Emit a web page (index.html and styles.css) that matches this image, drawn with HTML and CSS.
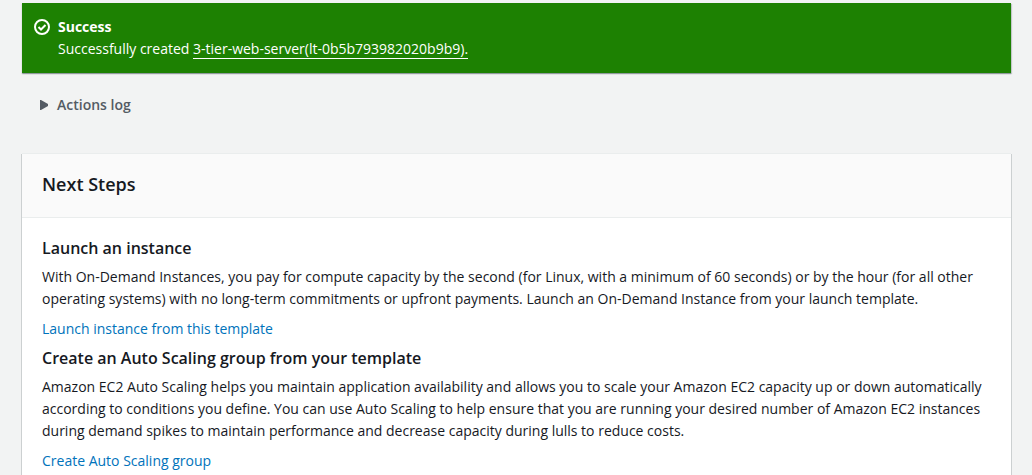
FILE: index.html
```html
<!DOCTYPE html>
<html lang="en">
<head>
<meta charset="utf-8">
<title>Create launch template</title>
<link rel="stylesheet" href="styles.css">
</head>
<body>
<main class="page">
  <section class="flash" role="status">
    <svg class="flash-icon" viewBox="0 0 16 16" aria-hidden="true"><circle cx="8" cy="8" r="7"/><path d="M4.500 8l2.500 2.500 4.500-4.500"/></svg>
    <div>
      <h2 class="flash-title">Success</h2>
      <p class="flash-text">Successfully created <a class="flash-link" href="#template">3-tier-web-server(lt-0b5b793982020b9b9).</a></p>
    </div>
  </section>
  <button class="log" type="button" aria-expanded="false">
    <svg class="log-icon" viewBox="0 0 9 10" aria-hidden="true"><path d="M0 0h1l7 4v2l-7 4H0z"/></svg>
    <span>Actions log</span>
  </button>
  <section class="card">
    <header class="card-header"><h1 class="card-title">Next Steps</h1></header>
    <div class="card-body">
      <h2 class="step-title">Launch an instance</h2>
      <p class="step-text">With On-Demand Instances, you pay for compute capacity by the second (for Linux, with a minimum of 60 seconds) or by the hour (for all other operating systems) with no long-term commitments or upfront payments. Launch an On-Demand Instance from your launch template.</p>
      <a class="step-link" href="#launch">Launch instance from this template</a>
      <h2 class="step-title">Create an Auto Scaling group from your template</h2>
      <p class="step-text">Amazon EC2 Auto Scaling helps you maintain application availability and allows you to scale your Amazon EC2 capacity up or down automatically according to conditions you define. You can use Auto Scaling to help ensure that you are running your desired number of Amazon EC2 instances during demand spikes to maintain performance and decrease capacity during lulls to reduce costs.</p>
      <a class="step-link" href="#scaling">Create Auto Scaling group</a>
    </div>
  </section>
</main>
</body>
</html>
```
FILE: styles.css
```css
* { box-sizing: border-box; }
body { margin: 0; background: #f2f3f3; color: #16191f; font: 14px/22px "Open Sans", sans-serif; }
h1, h2, p { margin: 0; }
.page { padding: 3px 21px 20px 22px; }
.flash { display: flex; gap: 8px; padding: 13px 12px; background: #1d8102; color: #fff; box-shadow: 0 1px 1px rgba(0, 28, 36, 0.3), 1px 1px 1px rgba(0, 28, 36, 0.15); }
.flash-icon { flex: none; width: 16px; height: 16px; margin-top: 3px; fill: none; stroke: #fff; stroke-width: 2; }
.flash-title { font-size: 14px; line-height: 22px; font-weight: 700; }
.flash-link { color: inherit; text-decoration: none; border-bottom: 1px solid #fff; }
.log { display: flex; align-items: center; gap: 8px; margin: 21px 0 38px; padding: 0 18px; border: 0; background: none; color: #545b64; font: 600 14px/22px "Open Sans", sans-serif; }
.log-icon { width: 9px; height: 10px; fill: #545b64; }
.card { background: #fff; box-shadow: 0 -1px 0 #eaeded, 0 1px 0 1px #ccd0d1; }
.card-header { padding: 19px 20px 22px; background: #fafafa; border-bottom: 1px solid #eaeded; }
.card-title { font-size: 18px; line-height: 22px; font-weight: 600; }
.card-body { padding: 20px; }
.step-title { font-size: 16px; line-height: 20px; font-weight: 600; }
.step-text { padding: 8px 0; }
.step-link { display: block; color: #0073bb; text-decoration: none; margin-bottom: 8px; }
```
